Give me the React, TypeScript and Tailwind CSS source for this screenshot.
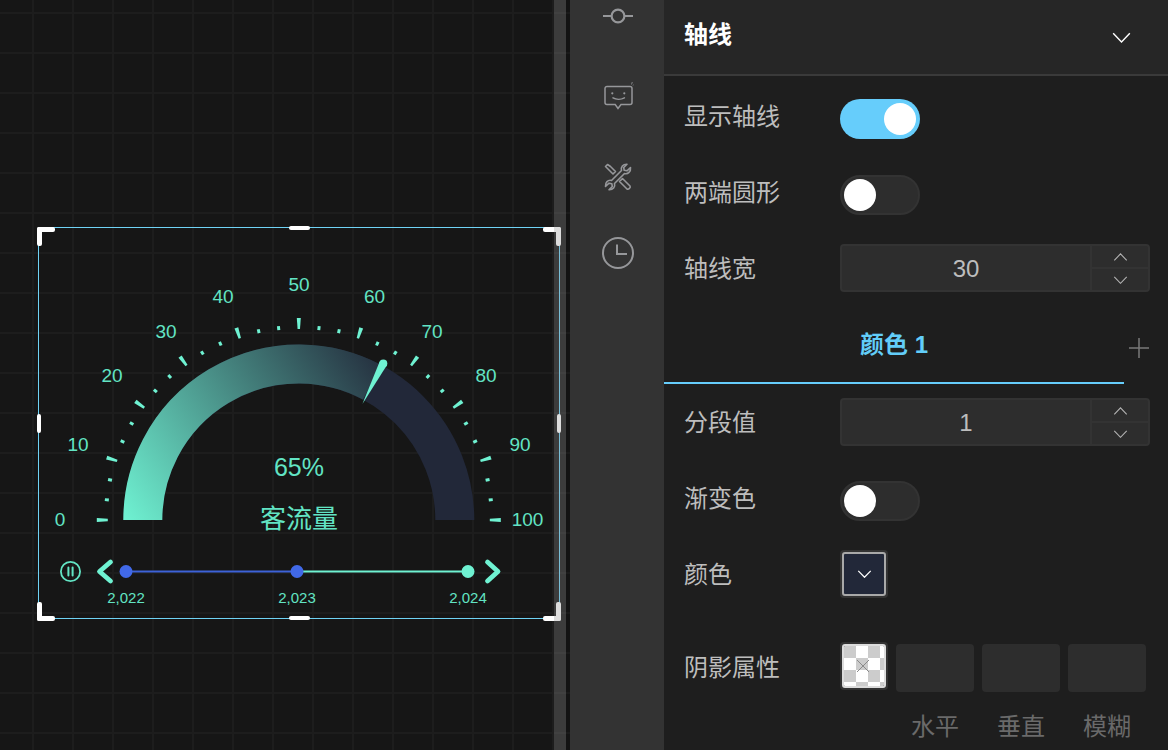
import React from 'react';

const MINT = '#6ff2d2';
const TEXT_MINT = '#62e4c4';
const CX = 298.8;
const CY = 520;

const scaleLabels = [
  { t: '0', x: 60, y: 519 },
  { t: '10', x: 78, y: 444 },
  { t: '20', x: 112, y: 375 },
  { t: '30', x: 166, y: 331 },
  { t: '40', x: 223, y: 296 },
  { t: '50', x: 299, y: 284 },
  { t: '60', x: 374.5, y: 296 },
  { t: '70', x: 432, y: 331 },
  { t: '80', x: 486, y: 375 },
  { t: '90', x: 520, y: 444 },
  { t: '100', x: 527.5, y: 519 },
];

function Gauge() {
  const ticks = Array.from({ length: 31 }, (_, i) => i);
  const endX = CX + 156 * Math.cos((62 * Math.PI) / 180);
  const endY = CY - 156 * Math.sin((62 * Math.PI) / 180);

  return (
    <svg viewBox="38 227 522 392" className="block w-[522px] h-[392px]">
      <defs>
        <linearGradient id="arc" gradientUnits="userSpaceOnUse" x1="124" y1="520" x2="385" y2="345">
          <stop offset="0" stopColor={MINT} />
          <stop offset="1" stopColor="#222839" />
        </linearGradient>
      </defs>

      {ticks.map(i => (
        <g key={i} transform={`rotate(${i * 6} ${CX} ${CY})`}>
          {i % 3 === 0 ? (
            <polygon
              fill={MINT}
              points={`${CX - 202},${CY - 2} ${CX - 191},${CY - 1.2} ${CX - 191},${CY + 1.2} ${CX - 202},${CY + 2}`}
            />
          ) : (
            <rect fill={MINT} x={CX - 195} y={CY - 1.5} width="4" height="3" />
          )}
        </g>
      ))}

      <path d={`M${CX - 156} ${CY} A156 156 0 0 1 ${CX + 156} ${CY}`} fill="none" stroke="#222839" strokeWidth="39" />
      <path d={`M${CX - 156} ${CY} A156 156 0 0 1 ${endX} ${endY}`} fill="none" stroke="url(#arc)" strokeWidth="39" />

      <polygon fill={MINT} points="362.4,404 379.6,361.8 387,365 " />
      <circle cx="383.3" cy="363.4" r="4" fill={MINT} />

      {scaleLabels.map(l => (
        <text key={l.t} x={l.x} y={l.y} dy="0.36em" textAnchor="middle" fontSize="19" fill={TEXT_MINT}>
          {l.t}
        </text>
      ))}

      <text x="299" y="467" dy="0.36em" textAnchor="middle" fontSize="25" fill={TEXT_MINT}>65%</text>
      <text x="299" y="519" dy="0.36em" textAnchor="middle" fontSize="26" fill={TEXT_MINT}>客流量</text>

      <circle cx="70.5" cy="571.5" r="9.6" fill="none" stroke={TEXT_MINT} strokeWidth="1.8" />
      <path d="M68.4 567.5v8M72.6 567.5v8" stroke={TEXT_MINT} strokeWidth="2" strokeLinecap="round" />

      <path d="M110.5 562L99.5 571.5L110.5 581" fill="none" stroke={MINT} strokeWidth="4.8" strokeLinecap="round" strokeLinejoin="round" />
      <path d="M487.5 562L498 571.5L487.5 581" fill="none" stroke={MINT} strokeWidth="4.8" strokeLinecap="round" strokeLinejoin="round" />

      <line x1="126" y1="571.5" x2="297" y2="571.5" stroke="#3d62d8" strokeWidth="2" />
      <line x1="297" y1="571.5" x2="468" y2="571.5" stroke={MINT} strokeWidth="2" />
      <circle cx="126" cy="571.5" r="6.5" fill="#4169e8" />
      <circle cx="297" cy="571.5" r="6.5" fill="#4169e8" />
      <circle cx="468" cy="571.5" r="6.5" fill={MINT} />

      <text x="126" y="598" dy="0.36em" textAnchor="middle" fontSize="15" fill={TEXT_MINT}>2,022</text>
      <text x="297" y="598" dy="0.36em" textAnchor="middle" fontSize="15" fill={TEXT_MINT}>2,023</text>
      <text x="468" y="598" dy="0.36em" textAnchor="middle" fontSize="15" fill={TEXT_MINT}>2,024</text>
    </svg>
  );
}

function Canvas() {
  return (
    <div className="relative w-[570px] h-full shrink-0 overflow-hidden bg-[#161616] bg-[linear-gradient(to_right,#1d1d1d_2px,transparent_2px),linear-gradient(to_bottom,#1d1d1d_2px,transparent_2px)] bg-[size:40px_40px] bg-[position:32px_12px]">
      <div className="absolute left-[38px] top-[227px] w-[522px] h-[392px] border border-[#6fd3f5]">
        <div className="absolute -left-px -top-px">
          <Gauge />
        </div>
        {/* corners */}
        <span className="absolute -left-[2px] -top-[1px] w-[18px] h-[5px] rounded-[2px] bg-white" />
        <span className="absolute -left-[2px] -top-[1px] w-[5px] h-[19px] rounded-[2px] bg-white" />
        <span className="absolute -right-[2px] -top-[1px] w-[18px] h-[5px] rounded-[2px] bg-white" />
        <span className="absolute -right-[2px] -top-[1px] w-[5px] h-[19px] rounded-[2px] bg-white" />
        <span className="absolute -left-[2px] -bottom-[3px] w-[18px] h-[5px] rounded-[2px] bg-white" />
        <span className="absolute -left-[2px] -bottom-[3px] w-[5px] h-[19px] rounded-[2px] bg-white" />
        <span className="absolute -right-[2px] -bottom-[3px] w-[18px] h-[5px] rounded-[2px] bg-white" />
        <span className="absolute -right-[2px] -bottom-[3px] w-[5px] h-[19px] rounded-[2px] bg-white" />
        {/* middle handles */}
        <span className="absolute left-[250px] -top-[2px] w-[21px] h-[4px] rounded-[2px] bg-white" />
        <span className="absolute left-[250px] -bottom-[2px] w-[21px] h-[4px] rounded-[2px] bg-white" />
        <span className="absolute -left-[2px] top-[186px] w-[4px] h-[19px] rounded-[2px] bg-white" />
        <span className="absolute -right-[2px] top-[186px] w-[4px] h-[19px] rounded-[2px] bg-white" />
      </div>
      {/* scrollbar track over the canvas */}
      <div className="absolute left-[554px] top-0 w-[12px] h-full bg-[#909092]/[.31]" />
      <div className="absolute left-[566px] top-0 w-[4px] h-full bg-[#000]/[.1]" />
    </div>
  );
}

function Sidebar() {
  return (
    <div className="w-[94px] h-full shrink-0 bg-[#333333] pl-[2px] flex flex-col items-center text-[#96979a]">
      <svg viewBox="0 0 30 16" className="w-[30px] h-[16px] mt-[8px]" fill="none" stroke="currentColor" strokeWidth="2.2">
        <circle cx="15" cy="8" r="6.4" />
        <path d="M0 8h8.6M21.4 8H30" />
      </svg>
      <svg viewBox="0 0 32 30" className="w-[32px] h-[30px] mt-[57px]" fill="none" stroke="currentColor" strokeWidth="1.5">
        <path d="M5 5.5h23a2 2 0 0 1 2 2v14a2 2 0 0 1-2 2H19L16 27.5l-2.8-4H5a2 2 0 0 1-2-2v-14a2 2 0 0 1 2-2z" />
        <circle cx="10.3" cy="12.3" r="1.1" fill="currentColor" stroke="none" />
        <circle cx="22.3" cy="12.3" r="1.1" fill="currentColor" stroke="none" />
        <path d="M11 16.8c3 1.8 8 1.8 11.4 0" strokeLinecap="round" />
        <path d="M29.5 3.5l0.8-2.5M31 4.5l0.8-1" strokeWidth="0.8" />
      </svg>
      <svg viewBox="0 0 28 28" className="w-[28px] h-[28px] mt-[52px]" fill="none" stroke="currentColor" strokeWidth="1.6" strokeLinejoin="round">
        <path d="M13 12L17.5 7.5C16.5 4 19 1 23 1.2L19.7 4.5L20.2 7.3L23 7.8L26.5 4.5C27 8.5 24 11.5 20.5 10.5L15 16L10.5 20.5C11.5 24 9 27 5 26.8L8.3 23.5L7.8 20.7L5 20.2L1.5 23.5C1 19.5 4 16.5 7.5 17.5Z" />
        <path d="M1.5 3.5L3.5 1.5L6.5 3.5L11.5 8.5L9 11L4 6Z" />
        <path d="M15.5 18.5L18.5 15.5L26 23C27 24.5 24.5 27 23 26Z" />
      </svg>
      <svg viewBox="0 0 32 32" className="w-[32px] h-[32px] mt-[46px]" fill="none" stroke="currentColor" strokeWidth="2">
        <circle cx="16" cy="16" r="15" />
        <path d="M15 7.5V17H25" />
      </svg>
    </div>
  );
}

function Toggle({ on }: { on?: boolean }) {
  return (
    <div
      className={`w-[80px] h-[40px] rounded-full flex items-center ${
        on ? 'bg-[#66cdfb] justify-end px-[4px]' : 'bg-[#2d2d2d] border-2 border-[#333333] px-[2px] justify-start'
      }`}
    >
      <span className="w-[32px] h-[32px] rounded-full bg-white" />
    </div>
  );
}

function Chevron({ className, up, width = 1.2 }: { className?: string; up?: boolean; width?: number }) {
  return (
    <svg viewBox="0 0 16 9" className={className} fill="none" stroke="currentColor" strokeWidth={width}>
      <path d={up ? 'M1 8.2L8 1L15 8.2' : 'M1 1L8 8.2L15 1'} />
    </svg>
  );
}

function NumberInput({ value }: { value: string }) {
  return (
    <div className="w-[310px] h-[48px] flex rounded-[4px] bg-[#2d2d2d] border-2 border-[#333333] text-[#bdbdbd]">
      <div className="w-[250px] flex items-center justify-center text-[24px] border-r-2 border-[#333333]">
        <span className="translate-y-[1px]">{value}</span>
      </div>
      <div className="flex-1 flex flex-col">
        <div className="flex-1 flex items-center justify-center border-b-2 border-[#333333]">
          <Chevron up className="w-[15px] h-[8px] text-[#b4b4b4]" />
        </div>
        <div className="flex-1 flex items-center justify-center">
          <Chevron className="w-[15px] h-[8px] text-[#b4b4b4]" />
        </div>
      </div>
    </div>
  );
}

function Row({ label, className, labelClass, children }: { label: string; className?: string; labelClass?: string; children: React.ReactNode }) {
  return (
    <div className={`flex items-center pl-[20px] ${className ?? ''}`}>
      <span className={`w-[156px] text-[24px] leading-[32px] text-[#bdbdbd] ${labelClass ?? ''}`}>{label}</span>
      {children}
    </div>
  );
}

function Panel() {
  return (
    <div className="flex-1 h-full bg-[#1e1e1e] flex flex-col overflow-hidden">
      <div className="h-[76px] shrink-0 bg-[#262626] border-b-2 border-[#3a3a3a] flex items-center justify-between pl-[20px] pr-[37px]">
        <span className="text-[24px] font-bold text-white -translate-y-[2px]">轴线</span>
        <Chevron className="w-[19px] h-[11px] text-white" />
      </div>

      <Row label="显示轴线" className="mt-[23px]" labelClass="-translate-y-[2px]">
        <Toggle on />
      </Row>
      <Row label="两端圆形" className="mt-[36px]" labelClass="-translate-y-[2px]">
        <Toggle />
      </Row>
      <Row label="轴线宽" className="mt-[29px]" labelClass="translate-y-[1px]">
        <NumberInput value="30" />
      </Row>

      <div className="h-[92px] shrink-0 relative">
        <div className="w-[460px] h-full border-b-2 border-[#66cdfb] flex justify-center items-start pt-[37px]">
          <span className="text-[24px] leading-[32px] font-bold text-[#62cdf9]">颜色 1</span>
        </div>
        <svg viewBox="0 0 20 20" className="absolute left-[465px] top-[46px] w-[20px] h-[20px] text-[#7a7a7a]" fill="none" stroke="currentColor" strokeWidth="1.5">
          <path d="M10 0v20M0 10h20" />
        </svg>
      </div>

      <Row label="分段值" className="mt-[14px]" labelClass="translate-y-[1px]">
        <NumberInput value="1" />
      </Row>
      <Row label="渐变色" className="mt-[35px]" labelClass="-translate-y-[2px]">
        <Toggle />
      </Row>
      <Row label="颜色" className="mt-[29px]" labelClass="translate-y-[1px]">
        <div className="w-[48px] h-[48px] p-[2px] rounded-[4px] bg-[#333333]">
          <div className="w-full h-full rounded-[3px] border-2 border-[#a9a9a9] bg-[#222839] flex items-center justify-center">
            <Chevron width={1.4} className="w-[15px] h-[8px] text-white" />
          </div>
        </div>
      </Row>

      <div className="flex pl-[20px] mt-[44px] items-start">
        <span className="w-[156px] text-[24px] leading-[32px] text-[#bdbdbd] mt-[10px]">阴影属性</span>
        <div className="w-[48px] h-[48px] p-[2px] rounded-[4px] bg-[#333333]">
          <div className="relative w-full h-full rounded-[3px] border-2 border-[#dcdcdc] overflow-hidden grid grid-cols-[repeat(4,12px)] grid-rows-[repeat(4,12px)]">
            <span className="bg-[#cccccc]" />
            <span className="bg-white" />
            <span className="bg-[#cccccc]" />
            <span className="bg-white" />
            <span className="bg-white" />
            <span className="bg-[#cccccc]" />
            <span className="bg-white" />
            <span className="bg-[#cccccc]" />
            <span className="bg-[#cccccc]" />
            <span className="bg-white" />
            <span className="bg-[#cccccc]" />
            <span className="bg-white" />
            <span className="bg-white" />
            <span className="bg-[#cccccc]" />
            <span className="bg-white" />
            <span className="bg-[#cccccc]" />
            <svg viewBox="0 0 12 12" className="absolute left-[13px] top-[14px] w-[12px] h-[12px] text-[#8a8a8a]" fill="none" stroke="currentColor" strokeWidth="1">
              <path d="M0 0L12 12M12 0L0 12" />
            </svg>
          </div>
        </div>
        <div className="ml-[8px] mt-[2px] grid grid-cols-3 gap-x-[8px]">
          <span className="w-[78px] h-[48px] rounded-[4px] bg-[#2d2d2d]" />
          <span className="w-[78px] h-[48px] rounded-[4px] bg-[#2d2d2d]" />
          <span className="w-[78px] h-[48px] rounded-[4px] bg-[#2d2d2d]" />
          <span className="text-center text-[24px] leading-[32px] text-[#6a6a6a] mt-[19px]">水平</span>
          <span className="text-center text-[24px] leading-[32px] text-[#6a6a6a] mt-[19px]">垂直</span>
          <span className="text-center text-[24px] leading-[32px] text-[#6a6a6a] mt-[19px]">模糊</span>
        </div>
      </div>
    </div>
  );
}

export default function App() {
  return (
    <div className="w-full h-screen flex overflow-hidden bg-[#161616] font-['Liberation_Sans','Noto_Sans_CJK_SC',sans-serif]">
      <Canvas />
      <Sidebar />
      <Panel />
    </div>
  );
}
